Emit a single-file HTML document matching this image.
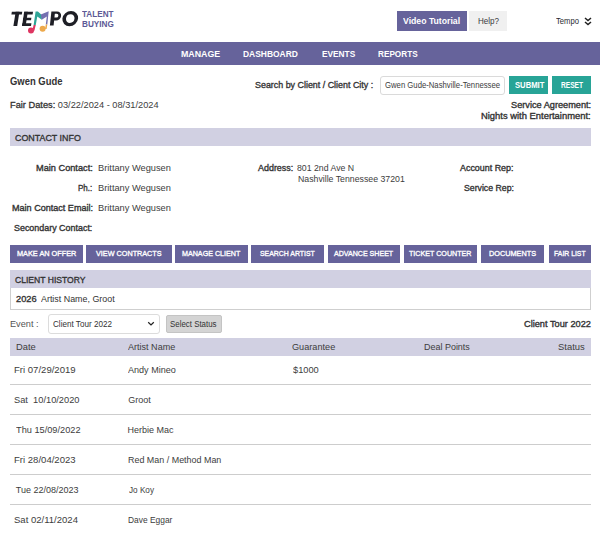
<!DOCTYPE html>
<html><head><meta charset="utf-8">
<style>
*{box-sizing:border-box;margin:0;padding:0}
html,body{width:600px;height:534px;overflow:hidden;background:#fff}
body{position:relative;font-family:"Liberation Sans",sans-serif;color:#333}
.a{position:absolute}
.t{position:absolute;white-space:nowrap;font-family:"Liberation Sans",sans-serif;transform-origin:0 0}
.pb{position:absolute;background:#66639b}
.bar{position:absolute;left:10px;width:581px;background:#d1d0e2}
.hr{position:absolute;left:10px;width:581px;height:1px;background:#cdcdcd}
</style></head><body>
<!-- logo -->
<svg class="a" style="left:0;top:0" width="90" height="40" viewBox="0 0 90 40">
 <g transform="translate(0,26) skewX(-9)" fill="#1e1f26">
  <rect x="9.6" y="-14.2" width="10.4" height="2.8"/>
  <rect x="13.4" y="-14.2" width="3.8" height="14.2"/>
  <rect x="22" y="-14.2" width="3.6" height="14.2"/>
  <rect x="22" y="-14.2" width="8.8" height="2.8"/>
  <rect x="22" y="-8.2" width="8.1" height="2.5"/>
  <rect x="22" y="-2.8" width="9" height="2.8"/>
 </g>
 <g transform="translate(0,25.5) skewX(-6)" fill="#1e1f26">
  <path fill-rule="evenodd" d="M49.9 0 V-14.1 H55.55 A4.55 4.55 0 0 1 55.55 -5 H53.6 V0 Z M53.6 -11.7 H55.5 A1.85 1.85 0 0 1 55.5 -8 H53.6 Z"/>
 </g>
 <g transform="translate(0,26.3) skewX(-6)" fill="#1e1f26">
  <path fill-rule="evenodd" d="M61.59 -7.7 A7.85 7.7 0 1 0 77.29 -7.7 A7.85 7.7 0 1 0 61.59 -7.7 Z M65.19 -7.7 A4.25 4.3 0 1 0 73.69 -7.7 A4.25 4.3 0 1 0 65.19 -7.7 Z"/>
 </g>
 <g transform="translate(25,8)">
  <path d="M10.6 3.6 L12.9 3.6 L17 7.2 L16.8 11.8 L12.3 8.6 L10.7 17.2 L8.6 17.2 Z" fill="#2ea597"/>
  <path d="M15.8 6.6 L23.7 3.3 L22.3 16.6 L20.8 16.6 L21.8 8.6 L16.8 11.8 Z" fill="#7470b0"/>
  <path d="M8.6 17 L10.7 17 L9.4 22.8 L7.3 22.8 Z" fill="#de3561"/>
  <circle cx="6" cy="22.4" r="3" fill="#de3561"/>
  <path d="M20.8 16.4 L22.3 16.4 L21.6 21 L20 21 Z" fill="#eda94c"/>
  <circle cx="17.6" cy="20.7" r="3" fill="#eda94c"/>
 </g>
</svg>
<div class="pb" style="left:397px;top:11px;width:70px;height:20px"></div>
<div class="a" style="left:469px;top:11px;width:38px;height:20px;background:#f0f0f0"></div>
<svg class="a" style="left:584px;top:17px" width="8" height="9" viewBox="0 0 8 9">
  <path d="M1 1 L4 3.6 L7 1 M1 5 L4 7.6 L7 5" fill="none" stroke="#222" stroke-width="1.5"/>
</svg>
<div class="pb" style="left:0;top:42px;width:600px;height:23px"></div>

<div class="a" style="left:380px;top:76px;width:125px;height:19px;border:1px solid #dadada;border-radius:3px"></div>
<div class="a" style="left:509px;top:76px;width:39px;height:18px;background:#28a497"></div>
<div class="a" style="left:552px;top:76px;width:39px;height:18px;background:#28a497"></div>

<div class="bar" style="top:128px;height:18px"></div>

<div class="pb" style="top:245px;height:18px;left:10px;width:73px"></div>
<div class="pb" style="top:245px;height:18px;left:86px;width:86px"></div>
<div class="pb" style="top:245px;height:18px;left:175px;width:73px"></div>
<div class="pb" style="top:245px;height:18px;left:251px;width:73px"></div>
<div class="pb" style="top:245px;height:18px;left:328px;width:72px"></div>
<div class="pb" style="top:245px;height:18px;left:404px;width:73px"></div>
<div class="pb" style="top:245px;height:18px;left:481px;width:63px"></div>
<div class="pb" style="top:245px;height:18px;left:549px;width:42px"></div>

<div class="bar" style="top:270px;height:18px"></div>
<div class="a" style="left:10px;top:288px;width:581px;height:22px;border:1px solid #cfcfcf;border-top:none"></div>

<div class="a" style="left:48px;top:314px;width:112px;height:20px;border:1px solid #dcdcdc;border-radius:3px"></div>
<svg class="a" style="left:147px;top:321px" width="8" height="5" viewBox="0 0 8 5"><path d="M1.2 1.2 L4 3.9 L6.8 1.2" fill="none" stroke="#222" stroke-width="1.25"/></svg>
<div class="a" style="left:166px;top:315px;width:56px;height:18px;background:#d4d4d4;border:1px solid #c4c4c4;border-radius:2px"></div>

<div class="bar" style="top:338px;height:18px"></div>
<div class="hr" style="top:384px"></div>
<div class="hr" style="top:414px"></div>
<div class="hr" style="top:444px"></div>
<div class="hr" style="top:474px"></div>
<div class="hr" style="top:504px"></div>

<div class="t" style="left:82.20px;top:10.20px;font-size:8.5px;line-height:8.5px;font-weight:bold;color:#5c5995;transform:scaleX(0.9576);">TALENT</div>
<div class="t" style="left:82.20px;top:20.00px;font-size:8.5px;line-height:8.5px;font-weight:bold;color:#5c5995;transform:scaleX(0.9636);">BUYING</div>
<div class="t" style="left:403.20px;top:16.75px;font-size:9px;line-height:9px;font-weight:bold;color:#fff;transform:scaleX(0.9644);">Video Tutorial</div>
<div class="t" style="left:477.70px;top:17.00px;font-size:9px;line-height:9px;font-weight:normal;color:#3a3a40;transform:scaleX(0.8955);">Help?</div>
<div class="t" style="left:556.25px;top:16.75px;font-size:9px;line-height:9px;font-weight:normal;color:#2a2a30;transform:scaleX(0.8500);">Tempo</div>
<div class="t" style="left:181.30px;top:49.20px;font-size:9.5px;line-height:9.5px;font-weight:bold;color:#fff;transform:scaleX(0.9286);">MANAGE</div>
<div class="t" style="left:243.20px;top:49.20px;font-size:9.5px;line-height:9.5px;font-weight:bold;color:#fff;transform:scaleX(0.8887);">DASHBOARD</div>
<div class="t" style="left:322.10px;top:49.20px;font-size:9.5px;line-height:9.5px;font-weight:bold;color:#fff;transform:scaleX(0.8737);">EVENTS</div>
<div class="t" style="left:378.40px;top:49.20px;font-size:9.5px;line-height:9.5px;font-weight:bold;color:#fff;transform:scaleX(0.8630);">REPORTS</div>
<div class="t" style="left:10.00px;top:76.80px;font-size:10px;line-height:10px;font-weight:bold;color:#333;transform:scaleX(0.9455);">Gwen Gude</div>
<div class="t" style="left:10.30px;top:101.00px;font-size:9px;line-height:9px;font-weight:normal;color:#3d3d3d;transform:scaleX(1.0278);"><span style="color:#333;-webkit-text-stroke:0.3px #333">Fair Dates:</span> 03/22/2024 - 08/31/2024</div>
<div class="t" style="left:254.80px;top:80.00px;font-size:9.5px;line-height:9.5px;font-weight:normal;color:#333;transform:scaleX(0.9365);-webkit-text-stroke:0.35px #333;">Search by Client / Client City :</div>
<div class="t" style="left:385.30px;top:81.00px;font-size:9px;line-height:9px;font-weight:normal;color:#3d3d3d;transform:scaleX(0.8582);">Gwen Gude-Nashville-Tennessee</div>
<div class="t" style="left:514.80px;top:81.30px;font-size:8.5px;line-height:8.5px;font-weight:bold;color:#fff;transform:scaleX(0.9000);">SUBMIT</div>
<div class="t" style="left:560.60px;top:81.30px;font-size:8.5px;line-height:8.5px;font-weight:bold;color:#fff;transform:scaleX(0.7793);">RESET</div>
<div class="t" style="left:511.20px;top:100.60px;font-size:9px;line-height:9px;font-weight:normal;color:#333;transform:scaleX(1.0205);-webkit-text-stroke:0.35px #333;">Service Agreement:</div>
<div class="t" style="left:481.20px;top:111.60px;font-size:9px;line-height:9px;font-weight:normal;color:#333;transform:scaleX(1.0438);-webkit-text-stroke:0.35px #333;">Nights with Entertainment:</div>
<div class="t" style="left:15.00px;top:133.00px;font-size:9.5px;line-height:9.5px;font-weight:normal;color:#333;transform:scaleX(0.9357);-webkit-text-stroke:0.35px #333;">CONTACT INFO</div>
<div class="t" style="left:36.30px;top:163.80px;font-size:9px;line-height:9px;font-weight:normal;color:#333;transform:scaleX(1.0218);-webkit-text-stroke:0.35px #333;">Main Contact:</div>
<div class="t" style="left:78.30px;top:183.80px;font-size:9px;line-height:9px;font-weight:normal;color:#333;transform:scaleX(0.8875);-webkit-text-stroke:0.35px #333;">Ph.:</div>
<div class="t" style="left:12.00px;top:203.80px;font-size:9px;line-height:9px;font-weight:normal;color:#333;transform:scaleX(1.0063);-webkit-text-stroke:0.35px #333;">Main Contact Email:</div>
<div class="t" style="left:14.20px;top:223.80px;font-size:9px;line-height:9px;font-weight:normal;color:#333;transform:scaleX(0.9911);-webkit-text-stroke:0.35px #333;">Secondary Contact:</div>
<div class="t" style="left:97.97px;top:163.80px;font-size:9px;line-height:9px;font-weight:normal;color:#3d3d3d;transform:scaleX(1.0290);">Brittany Wegusen</div>
<div class="t" style="left:97.97px;top:183.80px;font-size:9px;line-height:9px;font-weight:normal;color:#3d3d3d;transform:scaleX(1.0290);">Brittany Wegusen</div>
<div class="t" style="left:97.97px;top:203.80px;font-size:9px;line-height:9px;font-weight:normal;color:#3d3d3d;transform:scaleX(1.0290);">Brittany Wegusen</div>
<div class="t" style="left:258.00px;top:163.50px;font-size:9px;line-height:9px;font-weight:normal;color:#333;transform:scaleX(0.9914);-webkit-text-stroke:0.35px #333;">Address:</div>
<div class="t" style="left:297.20px;top:163.50px;font-size:9px;line-height:9px;font-weight:normal;color:#3d3d3d;transform:scaleX(0.9712);">801 2nd Ave N</div>
<div class="t" style="left:297.83px;top:175.20px;font-size:9px;line-height:9px;font-weight:normal;color:#3d3d3d;transform:scaleX(0.9716);">Nashville Tennessee 37201</div>
<div class="t" style="left:459.60px;top:164.00px;font-size:9px;line-height:9px;font-weight:normal;color:#333;transform:scaleX(0.9889);-webkit-text-stroke:0.35px #333;">Account Rep:</div>
<div class="t" style="left:463.60px;top:184.00px;font-size:9px;line-height:9px;font-weight:normal;color:#333;transform:scaleX(0.9686);-webkit-text-stroke:0.35px #333;">Service Rep:</div>
<div class="t" style="left:16.70px;top:250.20px;font-size:8px;line-height:8px;font-weight:normal;color:#fff;transform:scaleX(0.9154);-webkit-text-stroke:0.35px #fff;">MAKE AN OFFER</div>
<div class="t" style="left:96.10px;top:250.20px;font-size:8px;line-height:8px;font-weight:normal;color:#fff;transform:scaleX(0.9056);-webkit-text-stroke:0.35px #fff;">VIEW CONTRACTS</div>
<div class="t" style="left:182.00px;top:250.20px;font-size:8px;line-height:8px;font-weight:normal;color:#fff;transform:scaleX(0.8924);-webkit-text-stroke:0.35px #fff;">MANAGE CLIENT</div>
<div class="t" style="left:259.70px;top:250.20px;font-size:8px;line-height:8px;font-weight:normal;color:#fff;transform:scaleX(0.8641);-webkit-text-stroke:0.35px #fff;">SEARCH ARTIST</div>
<div class="t" style="left:333.70px;top:250.20px;font-size:8px;line-height:8px;font-weight:normal;color:#fff;transform:scaleX(0.8836);-webkit-text-stroke:0.35px #fff;">ADVANCE SHEET</div>
<div class="t" style="left:409.30px;top:250.20px;font-size:8px;line-height:8px;font-weight:normal;color:#fff;transform:scaleX(0.8914);-webkit-text-stroke:0.35px #fff;">TICKET COUNTER</div>
<div class="t" style="left:489.30px;top:250.20px;font-size:8px;line-height:8px;font-weight:normal;color:#fff;transform:scaleX(0.9115);-webkit-text-stroke:0.35px #fff;">DOCUMENTS</div>
<div class="t" style="left:554.30px;top:250.20px;font-size:8px;line-height:8px;font-weight:normal;color:#fff;transform:scaleX(0.8568);-webkit-text-stroke:0.35px #fff;">FAIR LIST</div>
<div class="t" style="left:15.20px;top:275.00px;font-size:9.5px;line-height:9.5px;font-weight:normal;color:#333;transform:scaleX(0.9026);-webkit-text-stroke:0.35px #333;">CLIENT HISTORY</div>
<div class="t" style="left:16.25px;top:294.80px;font-size:9px;line-height:9px;font-weight:normal;color:#333;transform:scaleX(1.0275);-webkit-text-stroke:0.35px #333;">2026</div>
<div class="t" style="left:40.70px;top:294.80px;font-size:9px;line-height:9px;font-weight:normal;color:#333;transform:scaleX(0.9880);">Artist Name, Groot</div>
<div class="t" style="left:9.78px;top:319.80px;font-size:9px;line-height:9px;font-weight:normal;color:#555;transform:scaleX(1.0192);">Event :</div>
<div class="t" style="left:53.00px;top:319.80px;font-size:9px;line-height:9px;font-weight:normal;color:#333;transform:scaleX(0.9015);">Client Tour 2022</div>
<div class="t" style="left:169.77px;top:319.60px;font-size:8.5px;line-height:8.5px;font-weight:normal;color:#333;transform:scaleX(0.9286);">Select Status</div>
<div class="t" style="left:523.50px;top:320.00px;font-size:9px;line-height:9px;font-weight:normal;color:#333;transform:scaleX(1.0231);-webkit-text-stroke:0.35px #333;">Client Tour 2022</div>
<div class="t" style="left:15.66px;top:343.00px;font-size:9px;line-height:9px;font-weight:normal;color:#3d3d3d;transform:scaleX(1.0389);">Date</div>
<div class="t" style="left:128.00px;top:343.00px;font-size:9px;line-height:9px;font-weight:normal;color:#3d3d3d;transform:scaleX(1.0043);">Artist Name</div>
<div class="t" style="left:291.70px;top:343.00px;font-size:9px;line-height:9px;font-weight:normal;color:#3d3d3d;transform:scaleX(1.0167);">Guarantee</div>
<div class="t" style="left:423.50px;top:343.00px;font-size:9px;line-height:9px;font-weight:normal;color:#3d3d3d;transform:scaleX(0.9956);">Deal Points</div>
<div class="t" style="left:557.55px;top:343.00px;font-size:9px;line-height:9px;font-weight:normal;color:#3d3d3d;transform:scaleX(1.0458);">Status</div>
<div class="t" style="left:14.24px;top:366.00px;font-size:9px;line-height:9px;font-weight:normal;color:#3d3d3d;transform:scaleX(1.0614);">Fri 07/29/2019</div>
<div class="t" style="left:14.27px;top:396.00px;font-size:9px;line-height:9px;font-weight:normal;color:#3d3d3d;transform:scaleX(1.0306);">Sat&nbsp; 10/10/2020</div>
<div class="t" style="left:15.50px;top:425.80px;font-size:9px;line-height:9px;font-weight:normal;color:#3d3d3d;transform:scaleX(1.0238);">Thu 15/09/2022</div>
<div class="t" style="left:14.24px;top:455.70px;font-size:9px;line-height:9px;font-weight:normal;color:#3d3d3d;transform:scaleX(1.0614);">Fri 28/04/2023</div>
<div class="t" style="left:15.80px;top:485.80px;font-size:9px;line-height:9px;font-weight:normal;color:#3d3d3d;">Tue 22/08/2023</div>
<div class="t" style="left:13.94px;top:516.00px;font-size:9px;line-height:9px;font-weight:normal;color:#3d3d3d;transform:scaleX(1.0593);">Sat 02/11/2024</div>
<div class="t" style="left:128.20px;top:366.00px;font-size:9px;line-height:9px;font-weight:normal;color:#3d3d3d;transform:scaleX(1.0064);">Andy Mineo</div>
<div class="t" style="left:128.20px;top:396.00px;font-size:9px;line-height:9px;font-weight:normal;color:#3d3d3d;">Groot</div>
<div class="t" style="left:127.50px;top:425.80px;font-size:9px;line-height:9px;font-weight:normal;color:#3d3d3d;">Herbie Mac</div>
<div class="t" style="left:127.51px;top:455.70px;font-size:9px;line-height:9px;font-weight:normal;color:#3d3d3d;transform:scaleX(0.9925);">Red Man / Method Man</div>
<div class="t" style="left:128.50px;top:485.80px;font-size:9px;line-height:9px;font-weight:normal;color:#3d3d3d;transform:scaleX(0.9071);">Jo Koy</div>
<div class="t" style="left:127.57px;top:516.00px;font-size:9px;line-height:9px;font-weight:normal;color:#3d3d3d;transform:scaleX(0.9340);">Dave Eggar</div>
<div class="t" style="left:293.30px;top:366.00px;font-size:9px;line-height:9px;font-weight:normal;color:#3d3d3d;transform:scaleX(1.0280);">$1000</div>
</body></html>
